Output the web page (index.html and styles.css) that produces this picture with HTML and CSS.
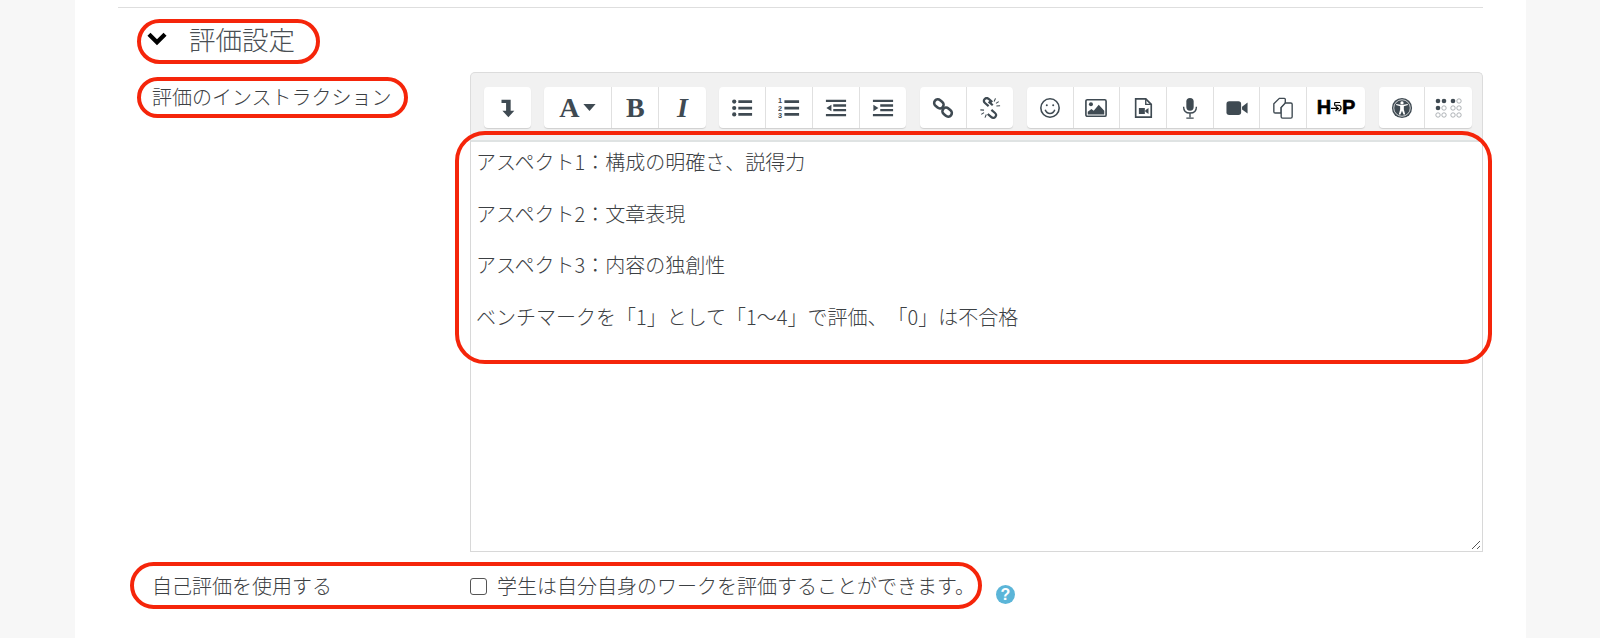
FILE: index.html
```html
<!DOCTYPE html>
<html lang="ja">
<head>
    <meta charset="UTF-8">
    <meta name="viewport" content="width=device-width, initial-scale=1.0">
    <title>評価設定</title>
    <link rel="stylesheet" href="styles.css">
</head>
<body>
    <main class="page">
        <hr class="divider">
        <h2 class="section-head">
            <svg class="chevron" viewBox="0 0 20 14"><path d="M2.500 3 10 10.500 17.500 3" fill="none" stroke="#000" stroke-width="4"/></svg>
            <span>評価設定</span>
        </h2>

        <div class="form-row">
            <label class="form-label">評価のインストラクション</label>
            <div class="editor">
                <div class="toolbar">
                    <div class="btn-group">
                        <button type="button" class="tool"><svg viewBox="0 0 24 24"><path d="M6 3h10v12h4l-6.500 7L7 15h4V6.500H6z" fill="#3f4a52"/></svg></button>
                    </div>
                    <div class="btn-group">
                        <button type="button" class="tool tool-wide"><span class="tool-text">A</span><svg class="caret" viewBox="0 0 14 8"><path d="M0 0h14L7 8z" fill="#3f4a52"/></svg></button>
                        <button type="button" class="tool"><span class="tool-text">B</span></button>
                        <button type="button" class="tool"><span class="tool-text tool-italic">I</span></button>
                    </div>
                    <div class="btn-group">
                        <button type="button" class="tool"><svg viewBox="0 0 24 24" fill="#3f4a52"><circle cx="3.500" cy="5" r="2.300"/><circle cx="3.500" cy="12" r="2.300"/><circle cx="3.500" cy="19" r="2.300"/><path d="M8 3.500h15v3H8zM8 10.500h15v3H8zM8 17.500h15v3H8z"/></svg></button>
                        <button type="button" class="tool"><svg viewBox="0 0 24 24" fill="#3f4a52"><text class="num" x="0" y="7">1</text><text class="num" x="0" y="15">2</text><text class="num" x="0" y="23">3</text><path d="M7 3.500h16v3H7zM7 10.500h16v3H7zM7 17.500h16v3H7z"/></svg></button>
                        <button type="button" class="tool"><svg viewBox="0 0 24 24" fill="#3f4a52"><path d="M1 3h22v2.500H1zM9 8h14v2.500H9zM9 13h14v2.500H9zM1 18.500h22V21H1zM7 8.500v7L1.500 12z"/></svg></button>
                        <button type="button" class="tool"><svg viewBox="0 0 24 24" fill="#3f4a52"><path d="M1 3h22v2.500H1zM9 8h14v2.500H9zM9 13h14v2.500H9zM1 18.500h22V21H1zM1.500 8.500v7L7 12z"/></svg></button>
                    </div>
                    <div class="btn-group">
                        <button type="button" class="tool"><svg viewBox="0 0 24 24" fill="none" stroke="#3f4a52" stroke-width="2.800"><rect x="2" y="3.500" width="11" height="8" rx="4" transform="rotate(40 7.500 7.500)"/><rect x="11" y="12.500" width="11" height="8" rx="4" transform="rotate(40 16.500 16.500)"/></svg></button>
                        <button type="button" class="tool"><svg viewBox="0 0 24 24" fill="none" stroke="#3f4a52" stroke-width="2.400"><path d="M10.500 10 6.500 6.500a3 3 0 0 1 4-4.500l4 3.500M13.500 14l4 3.500a3 3 0 0 1-4 4.500l-4-3.500M10.500 5 15 9"/><path stroke-width="1.200" d="M18 1.500 16.500 5M21.500 5 18.500 7M23 9.500l-4 .3M1.500 14l4 .3M2.500 19l3-2M6.500 22.500 8 19"/></svg></button>
                    </div>
                    <div class="btn-group">
                        <button type="button" class="tool"><svg viewBox="0 0 24 24" fill="none" stroke="#3f4a52" stroke-width="1.700"><circle cx="12" cy="12" r="10"/><circle cx="8.500" cy="9" r="1.100" fill="#3f4a52" stroke="none"/><circle cx="15.500" cy="9" r="1.100" fill="#3f4a52" stroke="none"/><path d="M6.800 14c1 2.800 3 4 5.200 4s4.200-1.200 5.200-4"/></svg></button>
                        <button type="button" class="tool"><svg viewBox="0 0 24 24"><rect x="1" y="3" width="22" height="18" rx="1.500" fill="none" stroke="#3f4a52" stroke-width="1.800"/><circle cx="6.500" cy="8" r="2.200" fill="#3f4a52"/><path d="M3 19v-3l4-3 2.500 2 5.500-6.500 6 6.500v4z" fill="#3f4a52"/></svg></button>
                        <button type="button" class="tool"><svg viewBox="0 0 24 24"><path d="M4 2h11l6 6v14H4z" fill="none" stroke="#3f4a52" stroke-width="1.800"/><path d="M15 2v6h6" fill="none" stroke="#3f4a52" stroke-width="1.500"/><path d="M7.500 12h6.500v6.500H7.500zM14.500 14.500l3.500-2.500v6.500l-3.500-2.500z" fill="#3f4a52"/></svg></button>
                        <button type="button" class="tool"><svg viewBox="0 0 24 24"><rect x="8" y="1" width="8" height="14" rx="4" fill="#3f4a52"/><path d="M5 10.500c0 4.500 3 7 7 7s7-2.500 7-7M12 17.500V22M8 23h8" fill="none" stroke="#3f4a52" stroke-width="1.500"/></svg></button>
                        <button type="button" class="tool"><svg viewBox="0 0 24 24" fill="#3f4a52"><rect x="0.500" y="4.500" width="16" height="15" rx="3"/><path d="m17.500 10.500 6-4.500v12l-6-4.500z"/></svg></button>
                        <button type="button" class="tool"><svg viewBox="0 0 24 24" fill="#fff" stroke="#3f4a52" stroke-width="1.500"><path d="M8 1.500h5.500a1 1 0 0 1 1 1V7l-4.500 4.500v6H3.500a1.500 1.500 0 0 1-1.500-1.500V7.500z"/><path d="M14.500 6.500h6a1.500 1.500 0 0 1 1.500 1.500v13.500a1.500 1.500 0 0 1-1.500 1.500h-9a1.500 1.500 0 0 1-1.500-1.500v-10z"/></svg></button>
                        <button type="button" class="tool tool-h5p"><span>H</span><svg class="h5p-arrow" viewBox="0 0 12 14"><path d="M0 7.500h7M5 5l3 2.500L5 10M4 1h6M4 1v3h4a3 3 0 0 1 0 6" fill="none" stroke="#000" stroke-width="1.300"/></svg><span>P</span></button>
                    </div>
                    <div class="btn-group">
                        <button type="button" class="tool"><svg viewBox="0 0 24 24"><circle cx="12" cy="12" r="11" fill="#3f4a52"/><circle cx="12" cy="12" r="9" fill="none" stroke="#fff" stroke-width=".8"/><circle cx="12" cy="6.500" r="1.800" fill="#fff"/><path d="M5.500 8.800 10 10v3.500L8.500 19h1.800l1.700-4 1.700 4h1.800L14 13.500V10l4.500-1.200-.3-1.300-6.200 1.200-6.200-1.200z" fill="#fff"/></svg></button>
                        <button type="button" class="tool tool-braille"><svg viewBox="0 0 27 20" fill="#3f4a52"><circle cx="3" cy="3" r="2.300"/><circle cx="9" cy="3" r="2.300"/><circle cx="3" cy="10" r="2.300"/><circle cx="18" cy="3" r="2.300"/><g fill="none" stroke="#9aa0a5" stroke-width=".8"><circle cx="24" cy="3" r="2.200"/><circle cx="9" cy="10" r="2.200"/><circle cx="18" cy="10" r="2.200"/><circle cx="24" cy="10" r="2.200"/><circle cx="3" cy="17" r="2.200"/><circle cx="9" cy="17" r="2.200"/><circle cx="18" cy="17" r="2.200"/><circle cx="24" cy="17" r="2.200"/></g></svg></button>
                    </div>
                </div>
                <div class="editor-body">
                    <p>アスペクト1：構成の明確さ、説得力</p>
                    <p>アスペクト2：文章表現</p>
                    <p>アスペクト3：内容の独創性</p>
                    <p>ベンチマークを「1」として「1〜4」で評価、「0」は不合格</p>
                    <svg class="resize-grip" viewBox="0 0 10 10"><path d="M1 9 9 1M6 9l3-3" stroke="#555" stroke-width="1" fill="none"/></svg>
                </div>
            </div>
        </div>

        <div class="form-row self-row">
            <label class="form-label">自己評価を使用する</label>
            <label class="check-label"><input type="checkbox" class="check"><span>学生は自分自身のワークを評価することができます。</span></label>
            <span class="help-icon">?</span>
        </div>
    </main>

    <!-- 赤い囲み -->
    <div class="mark mark-head"></div>
    <div class="mark mark-label"></div>
    <div class="mark mark-editor"></div>
    <div class="mark mark-self"></div>
</body>
</html>
```

FILE: styles.css
```css
html, body {
    margin: 0;
    padding: 0;
    height: 638px;
    overflow: hidden;
}
body {
    background-color: #f7f7f7;
    font-family: "Noto Sans CJK JP", "Liberation Sans", sans-serif;
    font-weight: 300;
    font-size: 20px;
    color: #3c4043;
    position: relative;
    text-spacing-trim: space-all;
}
.page {
    margin-left: 75px;
    width: 1451px;
    height: 638px;
    background: white;
    padding-top: 7px;
    box-sizing: border-box;
}
.divider {
    margin: 0 43px;
    border: none;
    border-top: 1px solid #dedede;
}
.section-head {
    display: flex;
    align-items: center;
    height: 64px;
    margin: 0 0 0 71px;
    padding-bottom: 4px;
    box-sizing: border-box;
    font-size: 26.500px;
    font-weight: 300;
    color: #4a4f54;
}
.chevron {
    width: 22px;
    height: 15px;
    margin-right: 21px;
}
.form-row {
    display: flex;
    margin-left: 77px;
}
.form-label {
    width: 318px;
    flex-shrink: 0;
    line-height: 28px;
    padding-top: 11px;
}
.editor {
    width: 1013px;
    box-sizing: border-box;
}
.toolbar {
    display: flex;
    gap: 13.700px;
    height: 68px;
    box-sizing: border-box;
    padding: 14px 0 0 13px;
    background-color: #f1f1f1;
    border: 1px solid #dcdcdc;
    border-bottom: none;
    border-radius: 5px 5px 0 0;
}
.btn-group {
    display: flex;
    height: 41px;
    background: white;
    border-radius: 4px;
    box-shadow: 0 1px 1px #cfcfcf;
}
.tool {
    width: 46.700px;
    height: 41px;
    padding: 0;
    border: none;
    border-right: 1px solid #e0e0e0;
    background: none;
    display: flex;
    align-items: center;
    justify-content: center;
    gap: 4px;
}
.tool:last-child {
    border-right: none;
}
.tool-wide {
    width: 68px;
}
.tool svg {
    width: 22px;
    height: 22px;
}
.tool .caret {
    width: 13px;
    height: 7px;
}
.tool-text {
    font-family: "Liberation Serif", serif;
    font-weight: bold;
    font-size: 28px;
    color: #3f4a52;
}
.tool-italic {
    font-style: italic;
}
.tool-h5p {
    width: 58px;
    gap: 0;
    font-family: "Liberation Sans", sans-serif;
    font-weight: bold;
    font-size: 20px;
    color: #000;
    -webkit-text-stroke: 0.6px #000;
}
.tool .h5p-arrow {
    width: 11px;
    height: 14px;
}
.tool-braille svg {
    width: 27px;
    height: 20px;
}
.num {
    font-family: "Liberation Sans", sans-serif;
    font-size: 8px;
    font-weight: bold;
}
.editor-body {
    position: relative;
    height: 412px;
    box-sizing: border-box;
    padding: 5px 5px 0;
    border: 1px solid #d8d8d8;
    border-top-color: #dfe3e3;
    border-top-width: 2px;
}
.editor-body p {
    margin: 0 0 21px;
    line-height: 30.500px;
}
.resize-grip {
    position: absolute;
    right: 1px;
    bottom: 1px;
    width: 10px;
    height: 10px;
}
.self-row {
    margin-top: 15px;
    align-items: center;
}
.self-row .form-label {
    padding-top: 0;
}
.check-label {
    display: flex;
    align-items: center;
    gap: 10px;
    line-height: 28px;
}
.check {
    appearance: none;
    width: 17px;
    height: 17px;
    margin: 2px 0 0;
    border: 1px solid #555;
    border-radius: 3px;
    background: white;
}
.help-icon {
    width: 19px;
    height: 19px;
    margin: 18px 0 0 21px;
    border-radius: 50%;
    background-color: #5bb5d8;
    color: white;
    font: bold 16px/19px "Liberation Sans", sans-serif;
    text-align: center;
}
.mark {
    position: absolute;
    box-sizing: border-box;
    border: 4px solid #f5250a;
    border-radius: 26px;
}
.mark-head {
    left: 137px;
    top: 19px;
    width: 183px;
    height: 45px;
}
.mark-label {
    left: 137px;
    top: 77px;
    width: 271px;
    height: 41px;
}
.mark-editor {
    left: 455px;
    top: 131px;
    width: 1037px;
    height: 233px;
    border-radius: 30px;
}
.mark-self {
    left: 130px;
    top: 562px;
    width: 852px;
    height: 47px;
}
```
